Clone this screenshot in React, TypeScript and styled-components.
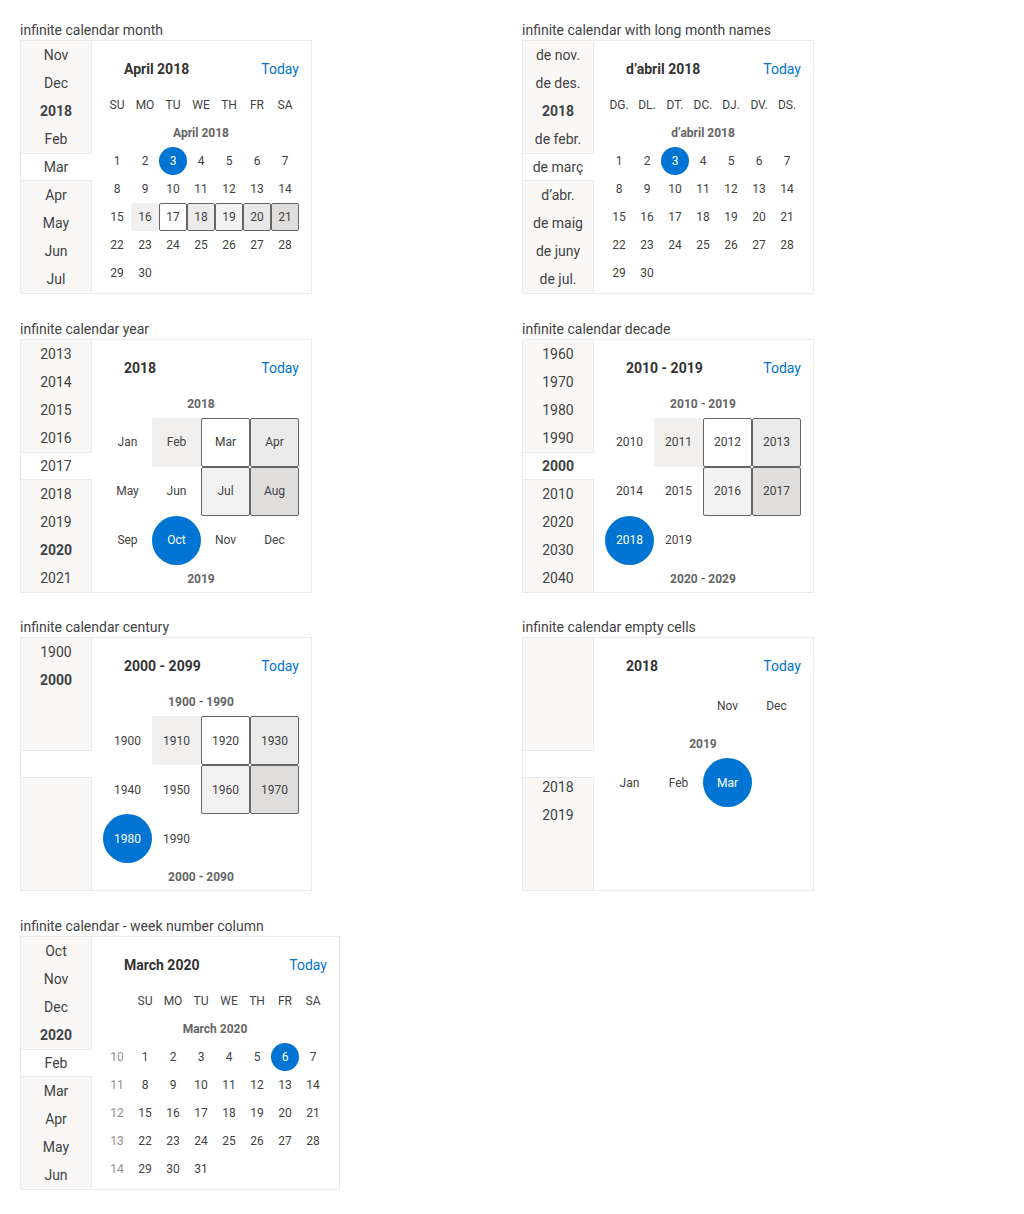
import React from 'react';
import styled, { createGlobalStyle, css } from 'styled-components';

type State = 'hover' | 'focus' | 'light' | 'mid' | 'soft' | 'deep';

type Item = { t: string; state?: State; selected?: boolean; week?: boolean };

type NavItem = { t: string; bold?: boolean };

const GlobalStyle = createGlobalStyle`
  body {
    margin: 0;
    font-family: Roboto, 'Liberation Sans', sans-serif;
    color: #424242;
    background: #fff;
  }
`;

export default function App() {
  return (
    <>
      <GlobalStyle />
      <Page>
        <Section>
          <Label>infinite calendar month</Label>
          <Calendar
            nav={navOf(['Nov', 'Dec', '2018*', 'Feb', 'Mar', 'Apr', 'May', 'Jun', 'Jul'])}
            title='April 2018'
          >
            <CellGrid $cols={7} $size={28}>
              {['SU', 'MO', 'TU', 'WE', 'TH', 'FR', 'SA'].map((d) => (
                <Weekday key={d}>{d}</Weekday>
              ))}
            </CellGrid>
            <Caption>April 2018</Caption>
            <Cells
              cols={7}
              size={28}
              items={days(1, 30, 0, {
                3: { selected: true },
                16: { state: 'hover' },
                17: { state: 'focus' },
                18: { state: 'light' },
                19: { state: 'soft' },
                20: { state: 'mid' },
                21: { state: 'deep' },
              })}
            />
          </Calendar>
        </Section>

        <Section>
          <Label>infinite calendar with long month names</Label>
          <Calendar
            nav={navOf([
              'de nov.',
              'de des.',
              '2018*',
              'de febr.',
              'de març',
              'd’abr.',
              'de maig',
              'de juny',
              'de jul.',
            ])}
            title='d’abril 2018'
          >
            <CellGrid $cols={7} $size={28}>
              {['DG.', 'DL.', 'DT.', 'DC.', 'DJ.', 'DV.', 'DS.'].map((d) => (
                <Weekday key={d}>{d}</Weekday>
              ))}
            </CellGrid>
            <Caption>d’abril 2018</Caption>
            <Cells cols={7} size={28} items={days(1, 30, 0, { 3: { selected: true } })} />
          </Calendar>
        </Section>

        <Section>
          <Label>infinite calendar year</Label>
          <Calendar
            nav={navOf(['2013', '2014', '2015', '2016', '2017', '2018', '2019', '2020*', '2021'])}
            title='2018'
          >
            <Caption>2018</Caption>
            <Cells
              cols={4}
              size={49}
              items={[
                { t: 'Jan' },
                { t: 'Feb', state: 'hover' },
                { t: 'Mar', state: 'focus' },
                { t: 'Apr', state: 'light' },
                { t: 'May' },
                { t: 'Jun' },
                { t: 'Jul', state: 'soft' },
                { t: 'Aug', state: 'deep' },
                { t: 'Sep' },
                { t: 'Oct', selected: true },
                { t: 'Nov' },
                { t: 'Dec' },
              ]}
            />
            <Caption>2019</Caption>
          </Calendar>
        </Section>

        <Section>
          <Label>infinite calendar decade</Label>
          <Calendar
            nav={navOf(['1960', '1970', '1980', '1990', '2000*', '2010', '2020', '2030', '2040'])}
            title='2010 - 2019'
          >
            <Caption>2010 - 2019</Caption>
            <Cells cols={4} size={49} items={span(2010, 1, 10, { 2011: 'hover', 2012: 'focus', 2013: 'light', 2016: 'soft', 2017: 'deep' }, 2018)} />
            <Caption>2020 - 2029</Caption>
          </Calendar>
        </Section>

        <Section>
          <Label>infinite calendar century</Label>
          <Calendar nav={navOf(['1900', '2000*'])} title='2000 - 2099'>
            <Caption>1900 - 1990</Caption>
            <Cells cols={4} size={49} items={span(1900, 10, 10, { 1910: 'hover', 1920: 'focus', 1930: 'light', 1960: 'soft', 1970: 'deep' }, 1980)} />
            <Caption>2000 - 2090</Caption>
          </Calendar>
        </Section>

        <Section>
          <Label>infinite calendar empty cells</Label>
          <Calendar nav={navOf(['', '', '', '', '', '2018', '2019'])} navShift={-5} bodyShift={-7} title='2018'>
            <Cells cols={4} size={49} items={[{ t: '' }, { t: '' }, { t: 'Nov' }, { t: 'Dec' }]} />
            <Caption>2019</Caption>
            <Cells cols={4} size={49} items={[{ t: 'Jan' }, { t: 'Feb' }, { t: 'Mar', selected: true }, { t: '' }]} />
          </Calendar>
        </Section>

        <Section>
          <Label>infinite calendar - week number column</Label>
          <Calendar
            nav={navOf(['Oct', 'Nov', 'Dec', '2020*', 'Feb', 'Mar', 'Apr', 'May', 'Jun'])}
            title='March 2020'
            wide
          >
            <CellGrid $cols={8} $size={28}>
              {['', 'SU', 'MO', 'TU', 'WE', 'TH', 'FR', 'SA'].map((d, i) => (
                <Weekday key={i}>{d}</Weekday>
              ))}
            </CellGrid>
            <Caption>March 2020</Caption>
            <Cells cols={8} size={28} items={weekDays()} />
          </Calendar>
        </Section>
      </Page>
    </>
  );
}

function navOf(list: string[]): NavItem[] {
  return list.map((s) => (s.endsWith('*') ? { t: s.slice(0, -1), bold: true } : { t: s }));
}

function days(from: number, to: number, lead: number, extra: Record<number, Partial<Item>>): Item[] {
  const out: Item[] = [];
  for (let i = 0; i < lead; i++) out.push({ t: '' });
  for (let d = from; d <= to; d++) out.push({ t: String(d), ...extra[d] });
  return out;
}

function span(start: number, step: number, count: number, states: Record<number, State>, selected: number): Item[] {
  const out: Item[] = [];
  for (let i = 0; i < count; i++) {
    const v = start + i * step;
    out.push({ t: String(v), state: states[v], selected: v === selected });
  }
  return out;
}

function weekDays(): Item[] {
  const out: Item[] = [];
  let day = 1;
  for (let w = 10; w <= 14; w++) {
    out.push({ t: String(w), week: true });
    for (let i = 0; i < 7 && day <= 31; i++, day++) {
      out.push({ t: String(day), selected: day === 6 });
    }
  }
  return out;
}

function Calendar({
  nav,
  title,
  wide,
  navShift = 0,
  bodyShift = 0,
  children,
}: {
  nav: NavItem[];
  title: string;
  wide?: boolean;
  navShift?: number;
  bodyShift?: number;
  children: React.ReactNode;
}) {
  return (
    <Box $wide={wide}>
      <Nav>
        <NavHighlight />
        <NavList $shift={navShift}>
          {nav.map((n, i) => (
            <NavEntry key={i} $bold={n.bold}>
              {n.t}
            </NavEntry>
          ))}
        </NavList>
      </Nav>
      <Main>
        <Header>
          <Title>{title}</Title>
          <Today>Today</Today>
        </Header>
        <Body $shift={bodyShift}>{children}</Body>
      </Main>
    </Box>
  );
}

function Cells({ cols, size, items }: { cols: number; size: number; items: Item[] }) {
  return (
    <CellGrid $cols={cols} $size={size}>
      {items.map((it, i) => (
        <Cell key={i} $state={it.state} $selected={it.selected} $week={it.week}>
          {it.t}
        </Cell>
      ))}
    </CellGrid>
  );
}

const Page = styled.div`
  display: grid;
  grid-template-columns: 502px 1fr;
  row-gap: 24.5px;
  padding: 20px;
  align-items: start;
`;

const Section = styled.div`
  display: flex;
  flex-direction: column;
`;

const Label = styled.div`
  font-size: 14px;
  line-height: 20px;
  color: #424242;
`;

const Box = styled.div<{ $wide?: boolean }>`
  display: flex;
  width: ${(p) => (p.$wide ? 320 : 292)}px;
  height: 254px;
  box-sizing: border-box;
  border: 1px solid #ebebeb;
  overflow: hidden;
  background: #fff;
`;

const Nav = styled.div`
  position: relative;
  flex: none;
  width: 70px;
  background: #f9f8f7;
  border-right: 1px solid #ebebeb;
`;

const NavHighlight = styled.div`
  position: absolute;
  top: 112px;
  left: 0;
  right: -1px;
  height: 28px;
  box-sizing: border-box;
  background: #fff;
  border-top: 1px solid #ebebeb;
  border-bottom: 1px solid #ebebeb;
`;

const NavList = styled.div<{ $shift: number }>`
  position: relative;
  margin-top: ${(p) => p.$shift}px;
`;

const NavEntry = styled.div<{ $bold?: boolean }>`
  height: 28px;
  line-height: 28px;
  text-align: center;
  font-size: 14px;
  white-space: nowrap;
  color: #424242;
  font-weight: ${(p) => (p.$bold ? 700 : 400)};
`;

const Main = styled.div`
  flex: 1;
  min-width: 0;
  padding: 12px 12px 0 11px;
  display: flex;
  flex-direction: column;
  overflow: hidden;
`;

const Header = styled.div`
  flex: none;
  display: flex;
  align-items: center;
  justify-content: space-between;
  height: 32px;
  margin-bottom: 6px;
`;

const Title = styled.div`
  padding-left: 21px;
  font-size: 14px;
  font-weight: 700;
  color: #333;
`;

const Today = styled.div`
  font-size: 14px;
  color: #0074d2;
`;

const Body = styled.div<{ $shift: number }>`
  margin-top: ${(p) => p.$shift}px;
`;

const CellGrid = styled.div<{ $cols: number; $size: number }>`
  display: grid;
  grid-template-columns: repeat(${(p) => p.$cols}, ${(p) => p.$size}px);
  grid-auto-rows: ${(p) => p.$size}px;
`;

const Weekday = styled.div`
  display: flex;
  align-items: center;
  justify-content: center;
  font-size: 12px;
  color: #424242;
`;

const Caption = styled.div`
  height: 28px;
  line-height: 28px;
  text-align: center;
  font-size: 12px;
  font-weight: 700;
  color: #656565;
`;

const stateBg: Record<State, string> = {
  hover: '#f1f0ef',
  focus: '#ffffff',
  light: '#ebebeb',
  soft: '#f2f2f2',
  mid: '#e8e8e8',
  deep: '#dfdedd',
};

const Cell = styled.div<{ $state?: State; $selected?: boolean; $week?: boolean }>`
  display: flex;
  align-items: center;
  justify-content: center;
  box-sizing: border-box;
  font-size: 12px;
  color: ${(p) => (p.$week ? '#8f8f8f' : '#424242')};
  border: 1px solid transparent;
  border-radius: 2px;
  ${(p) =>
    p.$state &&
    css`
      background: ${stateBg[p.$state]};
      border-color: ${p.$state === 'hover' ? 'transparent' : '#656565'};
    `}
  ${(p) =>
    p.$selected &&
    css`
      background: #0074d2;
      color: #fff;
      border-radius: 50%;
    `}
`;
